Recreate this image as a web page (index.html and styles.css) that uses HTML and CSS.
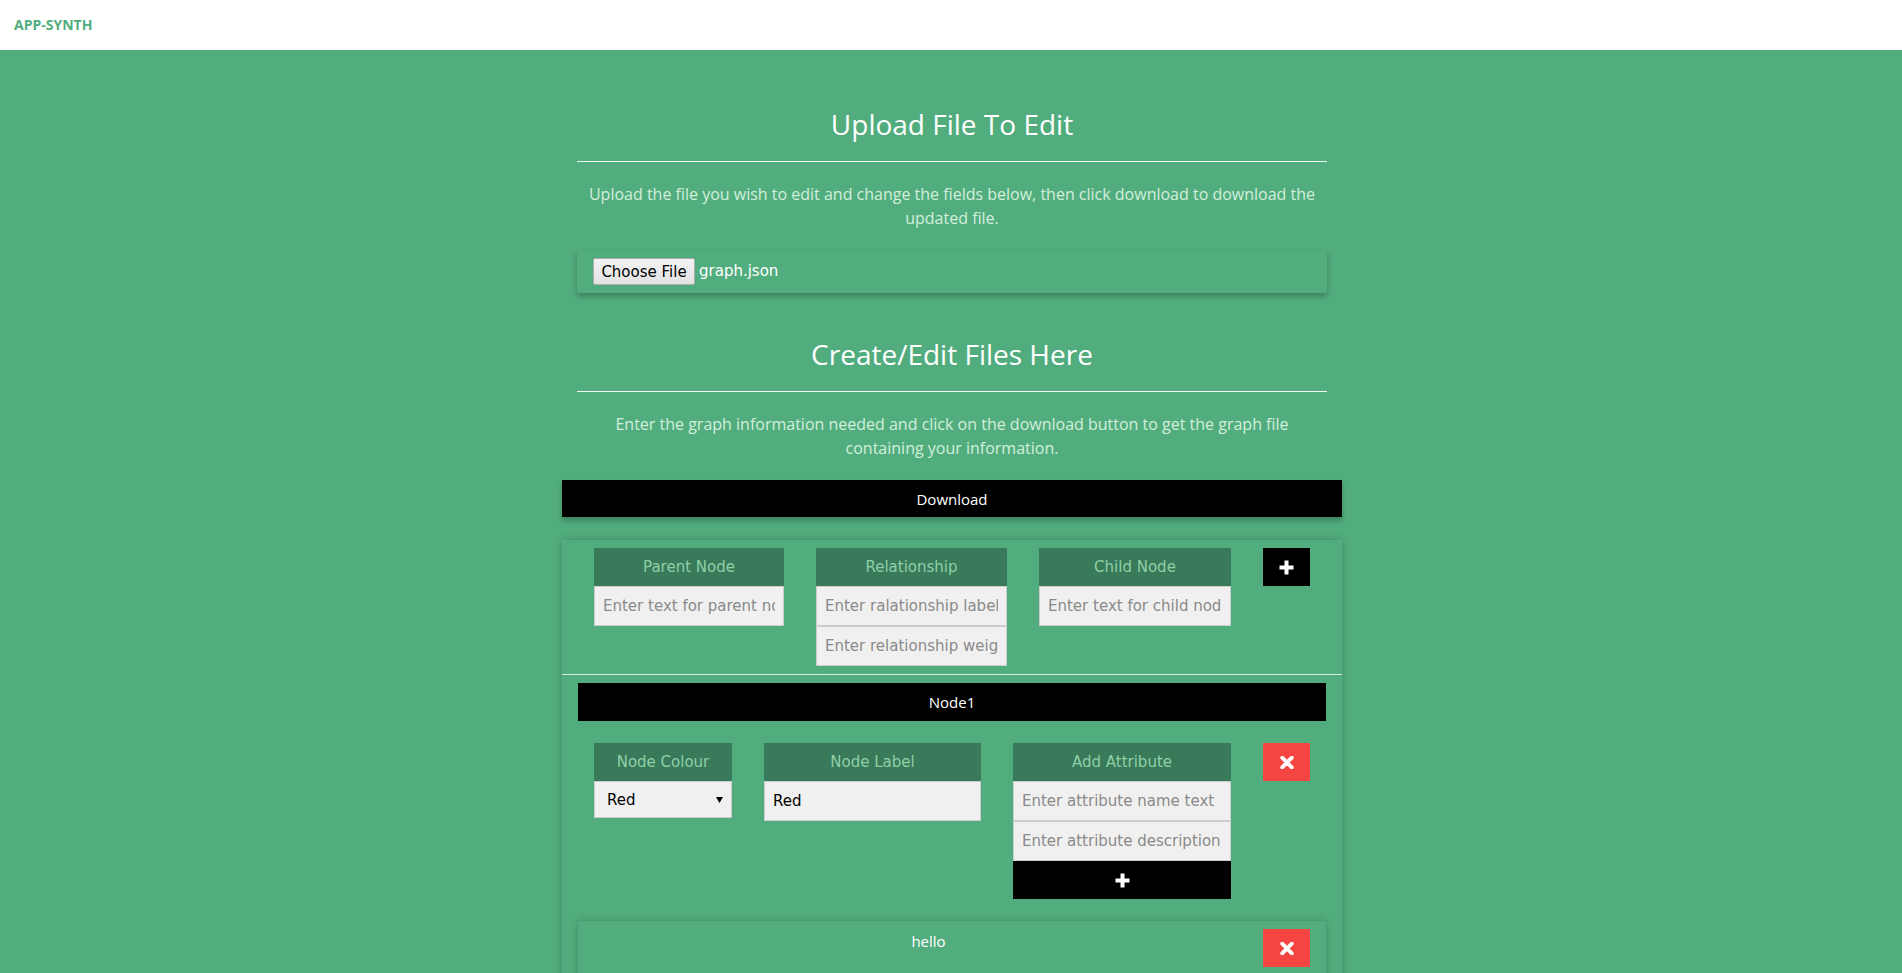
FILE: index.html
```html
<!DOCTYPE html>
<html lang="en">
<head>
<meta charset="utf-8">
<title>APP-SYNTH</title>
<link rel="stylesheet" href="styles.css">
</head>
<body>
<header class="topbar">
  <span class="brand">APP-SYNTH</span>
</header>
<main class="page">
  <section class="upload">
    <h2 class="title">Upload File To Edit</h2>
    <hr class="rule">
    <p class="lead">Upload the file you wish to edit and change the fields below, then click download to download the updated file.</p>
    <div class="filebox">
      <button class="choose" type="button">Choose File</button>
      <span class="filename">graph.json</span>
    </div>
  </section>

  <section class="create">
    <div class="create-head">
      <h2 class="title">Create/Edit Files Here</h2>
      <hr class="rule">
      <p class="lead">Enter the graph information needed and click on the download button to get the graph file containing your information.</p>
    </div>
    <button class="download" type="button">Download</button>

    <div class="card">
      <div class="row rel-row">
        <div class="col w190">
          <div class="col-head">Parent Node</div>
          <input class="field" type="text" placeholder="Enter text for parent node">
        </div>
        <div class="col w191">
          <div class="col-head">Relationship</div>
          <input class="field" type="text" placeholder="Enter ralationship label">
          <input class="field" type="text" placeholder="Enter relationship weight">
        </div>
        <div class="col w192">
          <div class="col-head">Child Node</div>
          <input class="field" type="text" placeholder="Enter text for child node">
        </div>
        <button class="icon-btn black" type="button" aria-label="add">
          <svg width="15" height="15" viewBox="0 0 15 15"><path d="M7.5 0.5v14M0.5 7.5h14" stroke="#fff" stroke-width="4"/></svg>
        </button>
      </div>

      <div class="divider"></div>

      <div class="node-bar">Node1</div>

      <div class="row node-row">
        <div class="col w138">
          <div class="col-head">Node Colour</div>
          <div class="select">
            <span>Red</span>
            <svg width="7" height="6" viewBox="0 0 7 6"><path d="M0 0h7L3.5 6z" fill="#000"/></svg>
          </div>
        </div>
        <div class="col w217">
          <div class="col-head">Node Label</div>
          <input class="field filled" type="text" value="Red">
        </div>
        <div class="col w218">
          <div class="col-head">Add Attribute</div>
          <input class="field" type="text" placeholder="Enter attribute name text">
          <input class="field" type="text" placeholder="Enter attribute description">
          <button class="attr-add" type="button" aria-label="add attribute">
            <svg width="15" height="15" viewBox="0 0 15 15"><path d="M7.5 0.5v14M0.5 7.5h14" stroke="#fff" stroke-width="4"/></svg>
          </button>
        </div>
        <button class="icon-btn red" type="button" aria-label="remove">
          <svg width="14" height="13" viewBox="0 0 14 13"><path d="M2.2 1.7l9.6 9.6M11.8 1.7l-9.6 9.6" stroke="#fff" stroke-width="3.8" stroke-linecap="round"/></svg>
        </button>
      </div>

      <div class="attr-card">
        <div class="attr-name">hello</div>
        <button class="icon-btn red" type="button" aria-label="remove attribute">
          <svg width="14" height="13" viewBox="0 0 14 13"><path d="M2.2 1.7l9.6 9.6M11.8 1.7l-9.6 9.6" stroke="#fff" stroke-width="3.8" stroke-linecap="round"/></svg>
        </button>
      </div>
    </div>
  </section>
</main>
</body>
</html>
```

FILE: styles.css
```css
* { box-sizing: border-box; }

html, body {
  margin: 0;
  padding: 0;
}

body {
  background: #52ad7e;
  font-family: "Open Sans", "Liberation Sans", sans-serif;
  color: #fff;
}

.topbar {
  height: 50px;
  background: #fff;
  padding-left: 14px;
  line-height: 48px;
}

.brand {
  font-family: "Open Sans", sans-serif;
  font-weight: 700;
  font-size: 14px;
  color: #52ad7e;
}

.page {
  padding-top: 57px;
  padding-bottom: 40px;
  padding-left: 2px;
}

.upload {
  width: 750px;
  margin: 0 auto;
}

.title {
  margin: 0;
  font-size: 28px;
  line-height: 34px;
  font-weight: 400;
  text-align: center;
  color: #fff;
}

.rule {
  margin: 20px 0 0;
  border: 0;
  height: 1px;
  background: #f2f7f4;
}

.lead {
  margin: 20px 0 0;
  font-size: 16px;
  line-height: 24px;
  text-align: center;
  color: #d3efdc;
}

.filebox {
  margin-top: 20px;
  height: 43px;
  padding: 8px 16px;
  display: flex;
  align-items: flex-start;
  gap: 4px;
  background: #52ad7e;
  box-shadow: 0 3px 6px rgba(0, 0, 0, 0.28);
}

.choose {
  height: 27px;
  width: 102px;
  padding: 0;
  font-family: "DejaVu Sans", sans-serif;
  font-size: 15px;
  color: #000;
  background: linear-gradient(#f3f3f3, #e2e2e2);
  border: 1px solid #adadad;
  border-radius: 2px;
}

.filename {
  font-family: "DejaVu Sans", sans-serif;
  font-size: 15px;
  line-height: 27px;
  color: #fff;
}

.create {
  width: 780px;
  margin: 44px auto 0;
}

.create-head {
  padding: 0 15px;
}

.download {
  display: block;
  width: 100%;
  height: 37px;
  margin-top: 20px;
  border: 0;
  background: #000;
  color: #fff;
  font-family: "Open Sans", sans-serif;
  font-size: 15px;
  box-shadow: 0 4px 6px rgba(0, 0, 0, 0.25);
}

.card {
  margin-top: 23px;
  padding-top: 8px;
  min-height: 460px;
  background: #52ad7e;
  box-shadow: 0 0 8px rgba(0, 0, 0, 0.22);
}

.row {
  display: flex;
  align-items: flex-start;
  gap: 32px;
  padding: 0 32px;
}

.col {
  display: flex;
  flex-direction: column;
}

.w190 { width: 190px; }
.w191 { width: 191px; }
.w192 { width: 192px; }
.w138 { width: 138px; }
.w217 { width: 217px; }
.w218 { width: 218px; }

.col-head {
  height: 38px;
  line-height: 38px;
  background: #387a59;
  color: #8fcfa7;
  text-align: center;
  font-family: "DejaVu Sans", sans-serif;
  font-size: 15px;
  white-space: nowrap;
  overflow: hidden;
}

.field {
  display: block;
  width: 100%;
  height: 40px;
  margin: 0;
  padding: 0 8px;
  background: #f0f0f0;
  border: 1px solid #cccccc;
  font-family: "DejaVu Sans", sans-serif;
  font-size: 15px;
  color: #000;
  outline: none;
}

.field::placeholder {
  color: #8a8a8a;
}

.select {
  height: 37px;
  display: flex;
  align-items: center;
  justify-content: space-between;
  padding: 0 8px 0 12px;
  background: #f0f0f0;
  border: 1px solid #cccccc;
  font-family: "DejaVu Sans", sans-serif;
  font-size: 15px;
  color: #000;
}

.icon-btn {
  width: 47px;
  height: 38px;
  flex: none;
  border: 0;
  padding: 0;
  display: flex;
  align-items: center;
  justify-content: center;
}

.black { background: #000; }
.red { background: #f44542; }

.attr-add {
  height: 38px;
  border: 0;
  padding: 0;
  background: #000;
  display: flex;
  align-items: center;
  justify-content: center;
}

.divider {
  height: 1px;
  margin-top: 8px;
  background: #d9ece1;
}

.node-bar {
  margin: 8px 16px 0;
  height: 38px;
  line-height: 38px;
  background: #000;
  color: #fff;
  text-align: center;
  font-size: 15px;
}

.node-row {
  margin-top: 22px;
}

.attr-card {
  margin: 22px 16px 0;
  min-height: 200px;
  padding: 8px 16px;
  display: flex;
  align-items: flex-start;
  background: #52ad7e;
  box-shadow: 0 0 8px rgba(0, 0, 0, 0.22);
}

.attr-name {
  flex: 1;
  text-align: center;
  font-size: 15px;
  line-height: 24px;
  color: #fff;
}
```
